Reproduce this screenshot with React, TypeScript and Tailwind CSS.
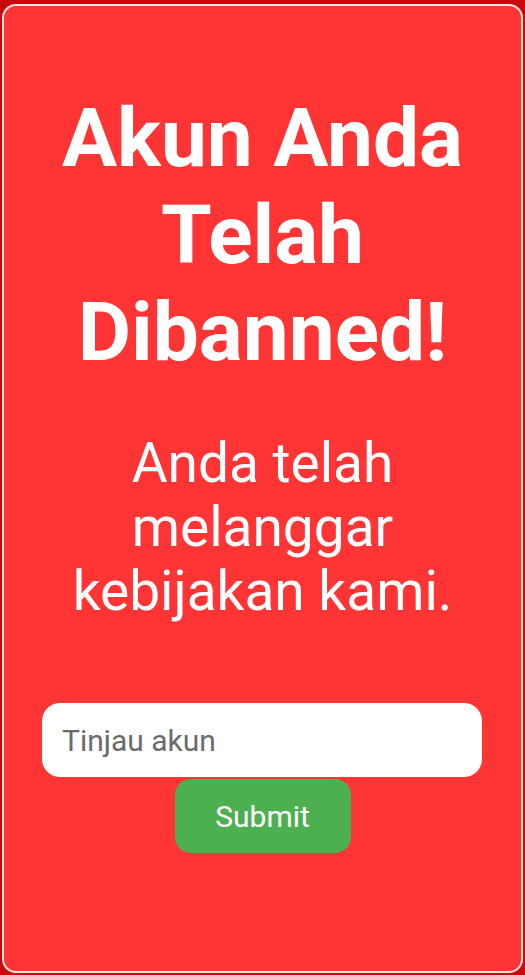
export default function App() {
  return (
    <div className="w-[525px] h-[975px] bg-[#c80a0a] pt-[4px] pl-[2px] pr-[2px] pb-[2px]" style={{ fontFamily: "Roboto, 'Noto Sans', sans-serif" }}>
      <div className="h-full rounded-[14px] border-2 border-[#fbe3e3] bg-[#ff3434] flex flex-col items-center px-[30px]">
        <h1 className="mt-[84px] text-center text-white font-bold text-[82px] leading-[97px]">
          Akun Anda Telah Dibanned!
        </h1>
        <p className="mt-[50px] text-center text-white text-[55px] leading-[64px] px-[18px]">
          Anda telah melanggar kebijakan kami.
        </p>
        <div className="mt-[80px] mr-[1px] w-[440px] h-[74px] rounded-[18px] bg-white flex items-center px-[20px]">
          <span className="text-[30px] text-[#6b6b6b]">Tinjau akun</span>
        </div>
        <button className="mt-[2px] w-[176px] h-[74px] rounded-[16px] bg-[#4caf50] text-white text-[30px]">
          Submit
        </button>
      </div>
    </div>
  );
}
